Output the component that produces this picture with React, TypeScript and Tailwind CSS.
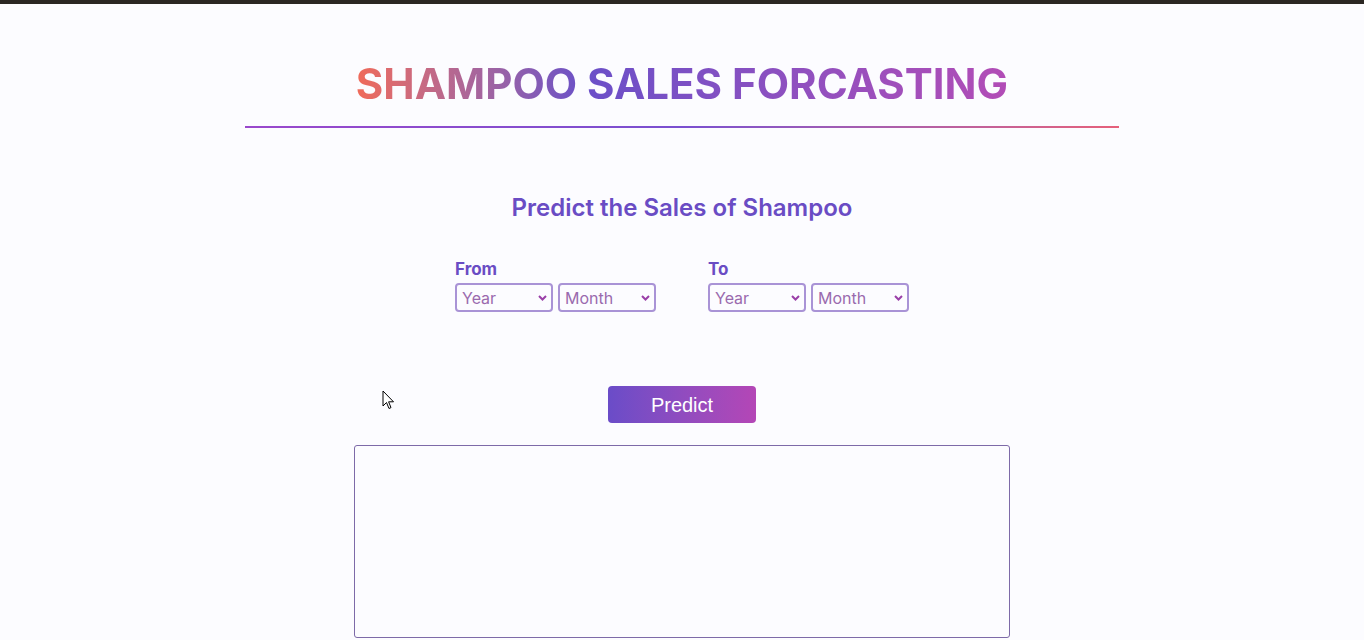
import React from "react";

const Select = ({ label }: { label: string }) => (
  <div className="relative w-[98px] h-[29px] rounded-[4px] border-2 border-[#a993d6] bg-[#fcfcff] flex items-center pl-[5px]">
    <span className="text-[16px] leading-none text-[#9a6aae]">{label}</span>
    <svg className="absolute right-[4px] top-[10px]" width="9" height="6" viewBox="0 0 9 6">
      <path d="M1 1 L4.5 4.5 L8 1" fill="none" stroke="#9a3fa8" strokeWidth="2" />
    </svg>
  </div>
);

const Group = ({ title }: { title: string }) => (
  <div className="flex flex-col">
    <div className="text-[17px] font-bold text-[#6a4cc4] leading-[20px]">{title}</div>
    <div className="flex gap-[5px] mt-[4px]">
      <Select label="Year" />
      <Select label="Month" />
    </div>
  </div>
);

export default function App() {
  return (
    <div className="relative min-h-[640px] bg-[#fcfcff] font-['Inter',sans-serif] overflow-hidden">
      <div className="h-[4px] bg-[#2b2723]" />
      <div className="flex flex-col items-center">
        <h1 className="mt-[52px] text-[42px] leading-[56px] font-bold bg-gradient-to-r from-[#f06a58] via-[#6a4fc8] via-35% to-[#b24cb6] bg-clip-text text-transparent">
          SHAMPOO SALES FORCASTING
        </h1>
        <div className="mt-[14px] w-[874px] h-[2px] bg-gradient-to-r from-[#9a48cc] via-[#7a4fd0] to-[#e6607a]" />
        <h2 className="mt-[65px] text-[24px] leading-[30px] font-semibold text-[#6a4cc4]">
          Predict the Sales of Shampoo
        </h2>
        <div className="mt-[36px] flex gap-[52px]">
          <Group title="From" />
          <Group title="To" />
        </div>
        <button className="mt-[74px] w-[148px] h-[37px] rounded-[4px] bg-gradient-to-r from-[#6a4cc8] to-[#b446b6] text-white text-[20px] font-['Liberation_Sans',sans-serif]">
          Predict
        </button>
        <div className="mt-[22px] w-[656px] h-[193px] border border-[#7d6aa8] rounded-[3px]" />
      </div>
      <svg className="absolute left-[382px] top-[390px]" width="13" height="21" viewBox="0 0 13 21">
        <path d="M1 1 L1 16 L4.5 12.5 L7 18.5 L9 17.6 L6.6 11.8 L11.5 11.8 Z" fill="#fff" stroke="#000" strokeWidth="1" strokeLinejoin="round" />
      </svg>
    </div>
  );
}
